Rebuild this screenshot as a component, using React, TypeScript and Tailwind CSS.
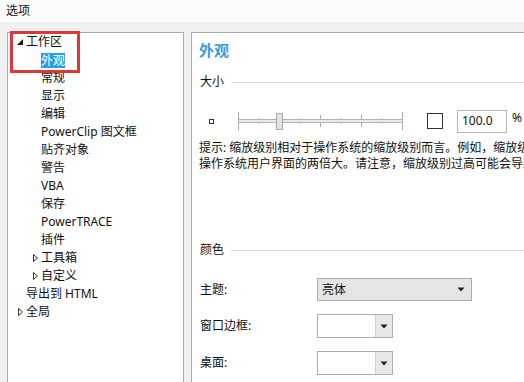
import React from 'react';

type Node = {
  label: string;
  indent: number;
  arrow?: 'open' | 'closed';
  selected?: boolean;
};

const tree: Node[] = [
  { label: '工作区', indent: 0, arrow: 'open' },
  { label: '外观', indent: 1, selected: true },
  { label: '常规', indent: 1 },
  { label: '显示', indent: 1 },
  { label: '编辑', indent: 1 },
  { label: 'PowerClip 图文框', indent: 1 },
  { label: '贴齐对象', indent: 1 },
  { label: '警告', indent: 1 },
  { label: 'VBA', indent: 1 },
  { label: '保存', indent: 1 },
  { label: 'PowerTRACE', indent: 1 },
  { label: '插件', indent: 1 },
  { label: '工具箱', indent: 1, arrow: 'closed' },
  { label: '自定义', indent: 1, arrow: 'closed' },
  { label: '导出到 HTML', indent: 0 },
  { label: '全局', indent: 0, arrow: 'closed' },
];

function Arrow({ kind }: { kind?: 'open' | 'closed' }) {
  if (!kind) return <span className="w-[10px] shrink-0" />;
  return (
    <span className="w-[10px] shrink-0 flex items-center">
      {kind === 'open' ? (
        <svg width="10" height="10" viewBox="0 0 10 10">
          <polygon points="7,2 7,8 1,8" fill="#1a1a1a" />
        </svg>
      ) : (
        <svg width="10" height="10" viewBox="0 0 10 10">
          <polygon points="2.5,1.5 6.5,5 2.5,8.5" fill="none" stroke="#333" strokeWidth="1" />
        </svg>
      )}
    </span>
  );
}

function TreeRow({ node }: { node: Node }) {
  return (
    <div className={`flex items-center h-[18px] ${node.indent === 0 ? 'pl-[8px]' : 'pl-[23px]'}`}>
      <Arrow kind={node.arrow} />
      <span
        className={
          node.selected
            ? 'bg-[#2a9ee4] text-white leading-[15px] whitespace-nowrap'
            : 'text-[#111] whitespace-nowrap'
        }
      >
        {node.label}
      </span>
    </div>
  );
}

function DownArrow() {
  return (
    <svg width="8" height="5" viewBox="0 0 8 5">
      <polygon points="0.5,0.5 7.5,0.5 4,4.5" fill="#222" />
    </svg>
  );
}

function Slider() {
  const ticks = [0, 20.5, 41, 61.5, 82, 102.5, 123, 143.5, 164];
  return (
    <svg width="166" height="22" viewBox="0 0 166 22" className="shrink-0">
      {ticks.map((t, i) => {
        const end = i === 0 || i === ticks.length - 1;
        const major = i % 2 === 0;
        const h = end ? 9 : major ? 6 : 3;
        return (
          <line
            key={i}
            x1={t + 0.5}
            x2={t + 0.5}
            y1={11 - h}
            y2={11 + h}
            stroke="#a9a9a9"
            strokeWidth="1"
          />
        );
      })}
      <rect x="0.5" y="9.5" width="164" height="3" fill="#e9e9e9" stroke="#b4b4b4" />
      <rect x="38.5" y="3.5" width="6" height="16" fill="#e3e3e3" stroke="#a8a8a8" />
    </svg>
  );
}

function GroupHeader({ title }: { title: string }) {
  return (
    <div className="flex items-center h-[16px] pl-[8px]">
      <span className="whitespace-nowrap">{title}</span>
      <div className="ml-[7px] flex-1 h-px bg-[#d9d9d9]" />
    </div>
  );
}

export default function App() {
  return (
    <div className="relative w-[524px] h-[382px] overflow-hidden bg-[#f0f0f0] text-[12px] text-[#111] font-['Noto_Sans','Noto_Sans_CJK_SC',sans-serif]">
      <div className="h-[22px] bg-[#fbfbfb] pl-[6px] flex items-center">选项</div>
      <div className="flex pt-[10px] pl-[7px] gap-[7px]">
        <div className="w-[177px] h-[360px] shrink-0 bg-white border border-[#a9a9a9]">
          {tree.map((n) => (
            <TreeRow key={n.label} node={n} />
          ))}
        </div>
        <div className="w-[360px] h-[360px] shrink-0 bg-white border border-[#a9a9a9]">
          <div className="h-[34px] pl-[7px] flex items-center text-[15px] font-bold text-[#3a9bd9]">外观</div>
          <div className="mt-[7px]">
            <GroupHeader title="大小" />
          </div>
          <div className="mt-[20px] h-[22px] pl-[8px] flex items-center">
            <span className="ml-[9px] w-[5px] h-[5px] border border-[#333] shrink-0" />
            <span className="ml-[24px] flex">
              <Slider />
            </span>
            <span className="ml-[23px] w-[16px] h-[16px] border border-[#333] bg-white shrink-0" />
            <span className="ml-[14px] w-[50px] h-[23px] border border-[#b5b5b5] flex items-center pl-[4px] shrink-0">
              100.0
            </span>
            <span className="ml-[5px] -mt-[6px]">%</span>
          </div>
          <div className="mt-[8px] pl-[7px] leading-[16px] whitespace-nowrap">
            <div>提示: 缩放级别相对于操作系统的缩放级别而言。例如，缩放级别为 200%，</div>
            <div>操作系统用户界面的两倍大。请注意，缩放级别过高可能会导致某些对话框</div>
          </div>
          <div className="mt-[70px]">
            <GroupHeader title="颜色" />
          </div>
          <div className="mt-[20px] flex items-center pl-[8px]">
            <span className="w-[117px] shrink-0">主题:</span>
            <div className="w-[155px] h-[23px] border border-[#adadad] bg-[#e5e5e5] flex items-center justify-between pl-[4px] pr-[6px]">
              <span>亮体</span>
              <DownArrow />
            </div>
          </div>
          <div className="mt-[13px] flex items-center pl-[8px]">
            <span className="w-[117px] shrink-0">窗口边框:</span>
            <div className="w-[76px] h-[24px] border border-[#adadad] bg-white flex">
              <div className="flex-1" />
              <div className="w-[17px] border-l border-[#d0d0d0] bg-[#e8e8e8] flex items-center justify-center">
                <DownArrow />
              </div>
            </div>
          </div>
          <div className="mt-[13px] flex items-center pl-[8px]">
            <span className="w-[117px] shrink-0">桌面:</span>
            <div className="w-[76px] h-[24px] border border-[#adadad] bg-white flex">
              <div className="flex-1" />
              <div className="w-[17px] border-l border-[#d0d0d0] bg-[#e8e8e8] flex items-center justify-center">
                <DownArrow />
              </div>
            </div>
          </div>
        </div>
      </div>
      <div className="absolute left-[10px] top-[31px] w-[70px] h-[42px] border-[3px] border-[#e0353b]" />
    </div>
  );
}
